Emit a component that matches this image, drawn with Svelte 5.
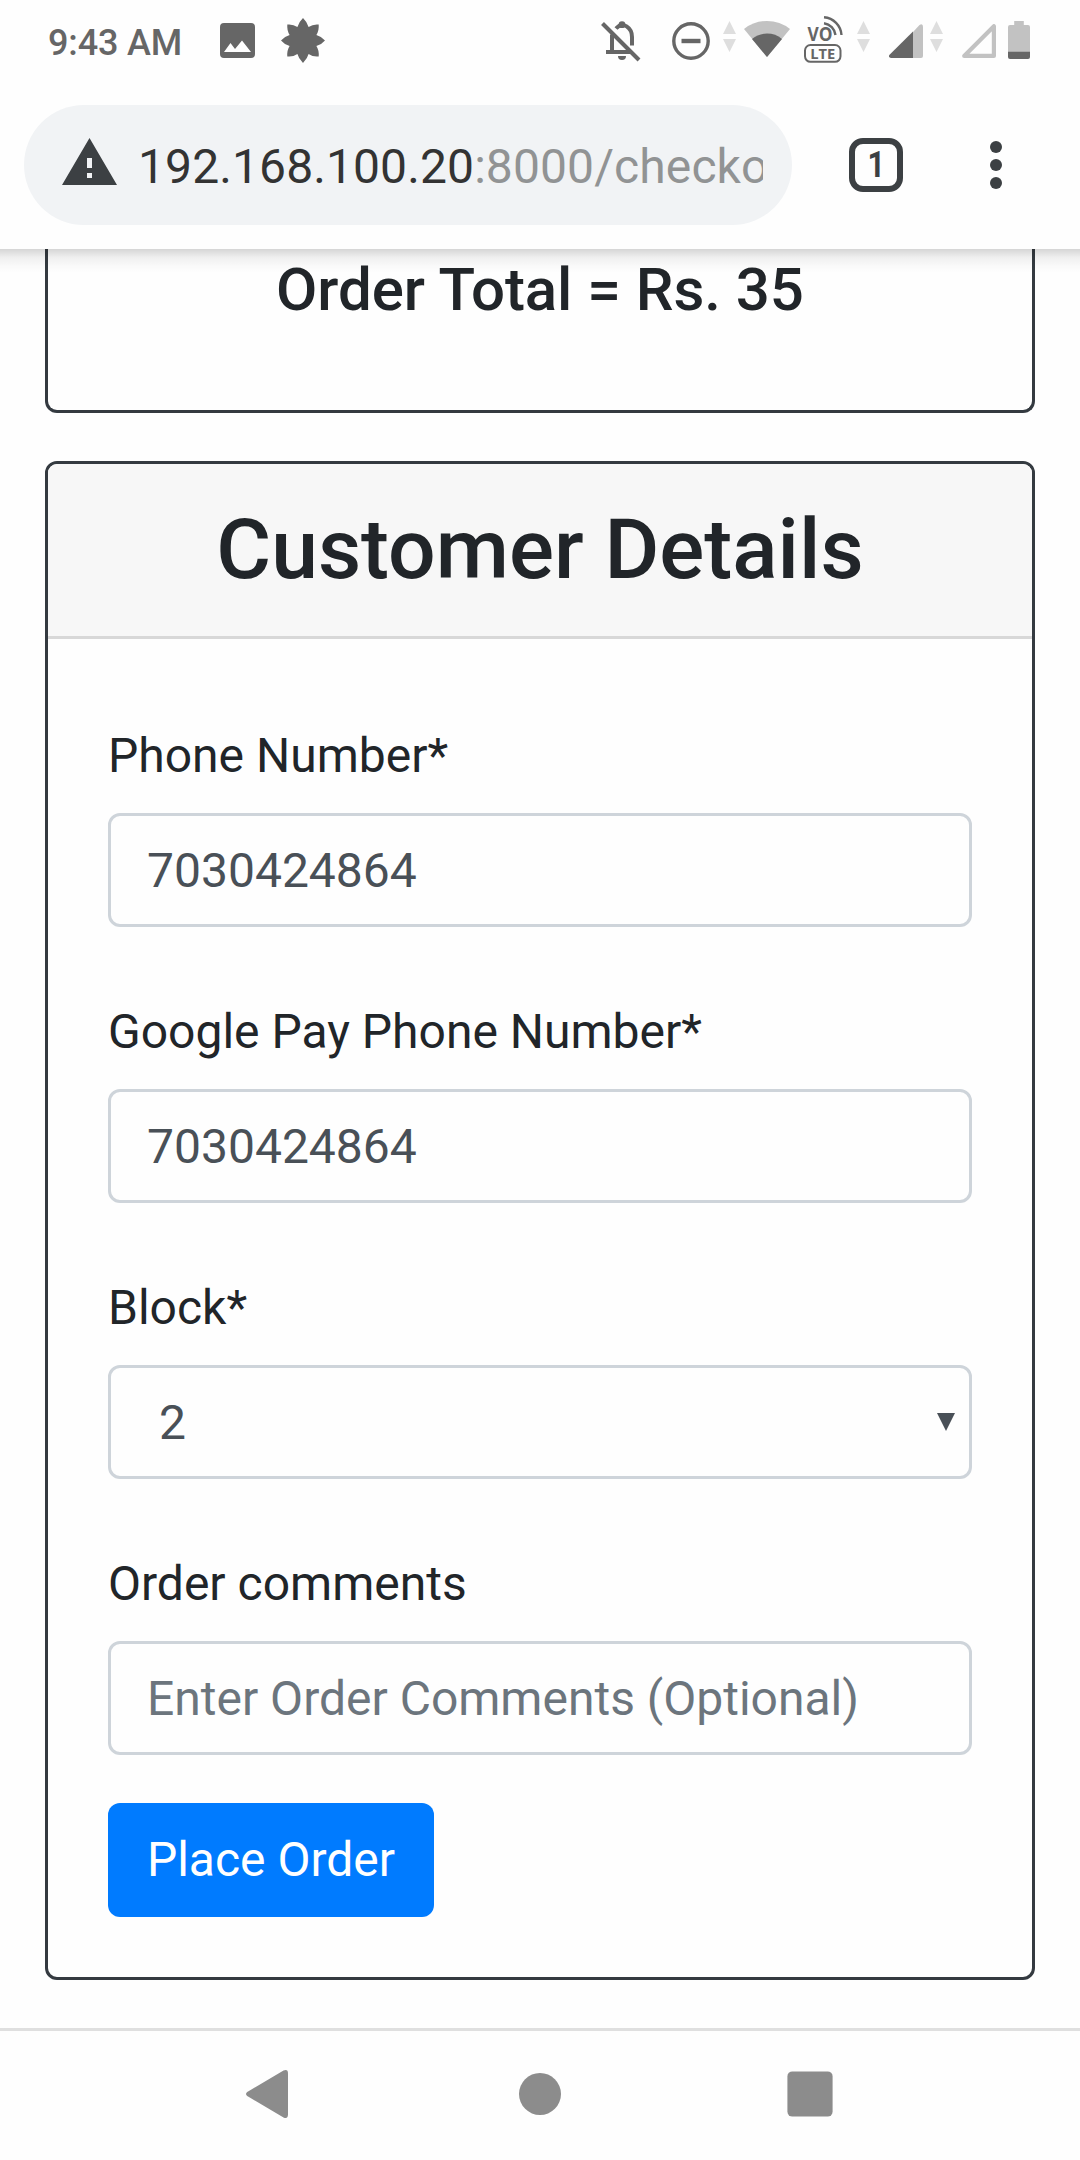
<script>
  let phone = $state('7030424864');
  let googlePay = $state('7030424864');
  let block = $state('2');
  let comments = $state('');
</script>

{#snippet dataArrows()}
  <svg class="arrows" width="13" height="31" viewBox="0 0 13 31">
    <path d="M6.5 0L13 13H0zM0 18h13L6.5 31z" fill="#dedede" />
  </svg>
{/snippet}

<div class="screen">
  <header class="top">
    <div class="status">
      <span class="time">9:43 AM</span>
      <svg class="photo" width="35" height="35" viewBox="0 0 35 35">
        <path fill="#666" fill-rule="evenodd" d="M4 0h27a4 4 0 0 1 4 4v27a4 4 0 0 1-4 4H4a4 4 0 0 1-4-4V4a4 4 0 0 1 4-4zM4 29h27L22 17.500l-7 8.500-4.500-6z" />
      </svg>
      <svg class="flower" width="44" height="45" viewBox="-22 -22.500 44 45">
        <path fill="#666" d="M0-22.500Q4.500-18 5.600-13.600Q10-16.600 15.700-16Q16.200-10 13.400-5.600Q18-4.500 22 0Q18 4.500 13.400 5.600Q16.200 10 15.700 16Q10 16.600 5.600 13.600Q4.500 18 0 22.500Q-4.500 18-5.600 13.600Q-10 16.600-15.700 16Q-16.200 10-13.400 5.600Q-18 4.500-22 0Q-18-4.500-13.400-5.600Q-16.200-10-15.700-16Q-10-16.600-5.600-13.600Q-4.500-18 0-22.500z" />
      </svg>

      <svg class="bell" width="40" height="41" viewBox="0 0 40 41">
        <path fill="none" stroke="#666" stroke-width="4" d="M5 31h25M11 31V13.500M15 7.500C22-.5 31 7 31 16v8.500" />
        <circle cx="21" cy="3.700" r="3.400" fill="#666" />
        <path d="M17 35h8a4 4 0 0 1-8 0z" fill="#666" />
        <path d="M1.500 2.500L38 39" stroke="#666" stroke-width="4" />
      </svg>
      <svg class="dnd" width="38" height="38" viewBox="0 0 38 38">
        <circle cx="19" cy="19" r="17.200" fill="none" stroke="#666" stroke-width="3.400" />
        <path d="M9.500 19h19" stroke="#666" stroke-width="4.400" />
      </svg>
      <div class="a1">{@render dataArrows()}</div>
      <svg class="wifi" width="46" height="36" viewBox="0 0 46 36">
        <path fill="#c2c2c2" d="M23 36L0 8Q10 0 23 0T46 8z" />
        <path fill="#666" d="M23 36L8 18Q14.500 12.600 23 12.600T38 18z" />
      </svg>
      <svg class="volte" width="40" height="47" viewBox="0 0 40 47">
        <g fill="none" stroke="#666">
          <rect x="1" y="29" width="35.500" height="16.800" rx="5.500" stroke-width="2" />
          <path d="M20 7.200A13.500 13.500 0 0 1 31.500 19M20 1.200A19 19 0 0 1 37.500 19" stroke-width="2.400" />
        </g>
        <text x="3.500" y="25" font-size="19.500" textLength="25" lengthAdjust="spacingAndGlyphs">VO</text>
        <text x="6.300" y="42.500" font-size="15" textLength="25" lengthAdjust="spacingAndGlyphs">LTE</text>
      </svg>
      <div class="a2">{@render dataArrows()}</div>
      <svg class="signal" width="34" height="34" viewBox="0 0 34 34">
        <path fill="#c2c2c2" d="M24 8L30.500 1Q34-1 34 3V32Q34 34 32 34H24z" />
        <path fill="#666" d="M24 7.500V34H2Q-1.500 33 .8 30.500z" />
      </svg>
      <div class="a3">{@render dataArrows()}</div>
      <svg class="empty" width="34" height="34" viewBox="0 0 34 34">
        <path fill="none" stroke="#c2c2c2" stroke-width="4.200" stroke-linejoin="round" d="M31.900 2.200V31.900H2.200z" />
      </svg>
      <svg class="battery" width="22" height="38" viewBox="0 0 22 38">
        <path fill="#c2c2c2" d="M6.200 0h9.600v4H20a2 2 0 0 1 2 2v25H0V6a2 2 0 0 1 2-2h4.200z" />
        <path fill="#666" d="M0 30.700h22V36a2 2 0 0 1-2 2H2a2 2 0 0 1-2-2z" />
      </svg>
    </div>

    <div class="toolbar">
      <div class="omnibox">
        <svg class="warn" width="55" height="47" viewBox="0 0 55 47">
          <path fill="#3c4043" fill-rule="evenodd" d="M27.500 0L55 47H0zM25 20v10h5V20zM25 35v5h5v-5z" />
        </svg>
        <div class="url">192.168.100.20<span>:8000/checko</span></div>
      </div>
      <div class="tabs"><span>1</span></div>
      <svg class="more" width="12" height="48" viewBox="0 0 12 48" fill="#3c4043">
        <circle cx="6" cy="6" r="6" />
        <circle cx="6" cy="24" r="6" />
        <circle cx="6" cy="42" r="6" />
      </svg>
    </div>
  </header>

  <main>
    <section class="card total">
      <h5>Order Total = Rs. 35</h5>
    </section>

    <section class="card">
      <div class="card-header"><h2>Customer Details</h2></div>
      <form class="card-body" onsubmit={(e) => e.preventDefault()}>
        <div class="group">
          <label for="phone">Phone Number*</label>
          <input id="phone" class="control" bind:value={phone} />
        </div>
        <div class="group">
          <label for="gpay">Google Pay Phone Number*</label>
          <input id="gpay" class="control" bind:value={googlePay} />
        </div>
        <div class="group">
          <label for="block">Block*</label>
          <div class="control picker">
            <select id="block" bind:value={block}>
              <option>1</option>
              <option>2</option>
              <option>3</option>
            </select>
            <svg width="18" height="18" viewBox="0 0 18 18"><path d="M0 0h18L9 18z" fill="#495057" /></svg>
          </div>
        </div>
        <div class="group">
          <label for="comments">Order comments</label>
          <input id="comments" class="control" placeholder="Enter Order Comments (Optional)" bind:value={comments} />
        </div>
        <button type="submit">Place Order</button>
      </form>
    </section>
  </main>

  <nav>
    <svg width="42" height="48" viewBox="0 0 42 48">
      <path fill="#8c8c8c" d="M1.200 22L37.500.6Q42-1.200 42 3.500V44.500Q42 49.200 37.500 47.400L1.200 26Q-1.200 24 1.200 22z" />
    </svg>
    <svg class="home" width="42" height="42" viewBox="0 0 42 42"><circle cx="21" cy="21" r="21" fill="#8c8c8c" /></svg>
    <svg class="recent" width="46" height="46" viewBox="0 0 46 46"><rect x=".4" y=".4" width="45.200" height="45.200" rx="5" fill="#8c8c8c" /></svg>
  </nav>
</div>

<style>
  :global(body) {
    margin: 0;
    background: #fff;
  }
  .screen {
    width: 1080px;
    height: 2160px;
    display: flex;
    flex-direction: column;
    overflow: hidden;
    font-family: Roboto, 'Liberation Sans', sans-serif;
    color: #212529;
    background: #fefefe;
  }
  .screen :global(*) {
    box-sizing: border-box;
  }
  svg {
    display: block;
    flex: none;
  }
  .top {
    position: relative;
    z-index: 1;
    height: 249px;
    flex: none;
    background: #fefefe;
  }
  .top::after {
    content: '';
    position: absolute;
    left: 0;
    right: 0;
    top: 100%;
    height: 24px;
    background: linear-gradient(rgba(0, 0, 0, 0.16), rgba(0, 0, 0, 0.06) 35%, rgba(0, 0, 0, 0.02) 70%, transparent);
  }
  .status {
    height: 105px;
    display: flex;
    align-items: flex-start;
  }
  .time {
    width: 172px;
    margin: 22px 0 0 48px;
    font-size: 36px;
    font-weight: 500;
    line-height: 42px;
    letter-spacing: -0.15px;
    color: #666;
    white-space: nowrap;
  }
  .photo { margin-top: 23px; }
  .flower { margin: 18px 0 0 26px; }
  .bell { margin: 21px 0 0 auto; }
  .dnd { margin: 21.500px 0 0 31px; }
  .a1 { margin: 21px 0 0 13px; }
  .wifi { margin: 21px 0 0 8px; }
  .volte { margin: 16px 0 0 14px; }
  .volte text {
    font-family: 'Open Sans', sans-serif;
    font-weight: 700;
    fill: #666;
  }
  .a2 { margin: 21px 0 0 13px; }
  .signal { margin: 24px 0 0 19px; }
  .a3 { margin: 21px 0 0 7px; }
  .empty { margin: 24px 0 0 19px; }
  .battery { margin: 21px 50px 0 12px; }

  .toolbar {
    display: flex;
    align-items: center;
    height: 120px;
    padding-left: 24px;
  }
  .omnibox {
    width: 768px;
    height: 120px;
    border-radius: 60px;
    background: #f1f3f5;
    display: flex;
    align-items: center;
    padding: 0 29.500px 0 38px;
  }
  .warn { margin-top: -7px; }
  .url {
    flex: 1;
    margin-left: 21px;
    overflow: hidden;
    white-space: nowrap;
    font-size: 48px;
    line-height: 60px;
    letter-spacing: 0.1px;
    margin-top: 4px;
    color: #333;
  }
  .url span { color: #919394; }
  .tabs {
    width: 54px;
    height: 54px;
    margin-left: 57px;
    border: 6px solid #3c4043;
    border-radius: 14px;
    font-size: 36px;
    font-weight: 700;
    line-height: 43px;
    text-align: center;
    color: #3c4043;
  }
  .tabs span {
    display: inline-block;
    transform: scaleX(0.85);
  }
  .more { margin-left: 87px; }

  main {
    height: 1779px;
    flex: none;
    padding: 0 45px;
  }
  .card {
    border: 3px solid #343a40;
    border-radius: 12px;
    margin-bottom: 48px;
  }
  .total {
    height: 164px;
    border-top: 0;
    border-radius: 0 0 12px 12px;
  }
  h2,
  h5 {
    margin: 0;
    font-weight: 500;
    text-align: center;
  }
  h5 {
    padding-top: 5px;
    font-size: 60px;
    line-height: 72px;
    letter-spacing: -0.05px;
  }
  .card-header {
    height: 175px;
    padding-top: 35px;
    background: #f7f7f7;
    border-bottom: 3px solid #d8d8d8;
    border-radius: 9px 9px 0 0;
  }
  h2 {
    font-size: 84px;
    line-height: 101px;
  }
  .card-body { padding: 81px 60px 60px; }
  .group { margin-bottom: 66px; }
  .group:nth-of-type(4) { margin-bottom: 48px; }
  label {
    display: block;
    margin-bottom: 21px;
    font-size: 48px;
    line-height: 72px;
  }
  .group + .group { padding-top: 3px; }
  .group:nth-of-type(-n + 3) { margin-bottom: 66px; }
  .control {
    display: block;
    width: 100%;
    height: 114px;
    padding: 0 36px;
    border: 3px solid #ced4da;
    border-radius: 12px;
    background: transparent;
    color: #495057;
    font-family: inherit;
    font-size: 48px;
    outline: none;
  }
  .control::placeholder {
    color: #6c757d;
    opacity: 1;
  }
  .picker {
    display: flex;
    align-items: center;
    padding: 0 14px 0 48px;
  }
  select {
    flex: 1;
    height: 100%;
    padding: 0;
    border: 0;
    appearance: none;
    background: none;
    color: inherit;
    font: inherit;
  }
  button {
    display: block;
    width: 326px;
    height: 114px;
    padding: 0;
    border: 0;
    border-radius: 12px;
    background: #007bff;
    color: #fff;
    font-family: inherit;
    font-size: 48px;
    line-height: 72px;
  }
  nav {
    height: 132px;
    flex: none;
    display: flex;
    align-items: center;
    border-top: 3px solid #dfdfdf;
    padding: 0 0 3px 246px;
  }
  .home { margin-left: 231px; }
  .recent { margin-left: 226px; }
</style>
